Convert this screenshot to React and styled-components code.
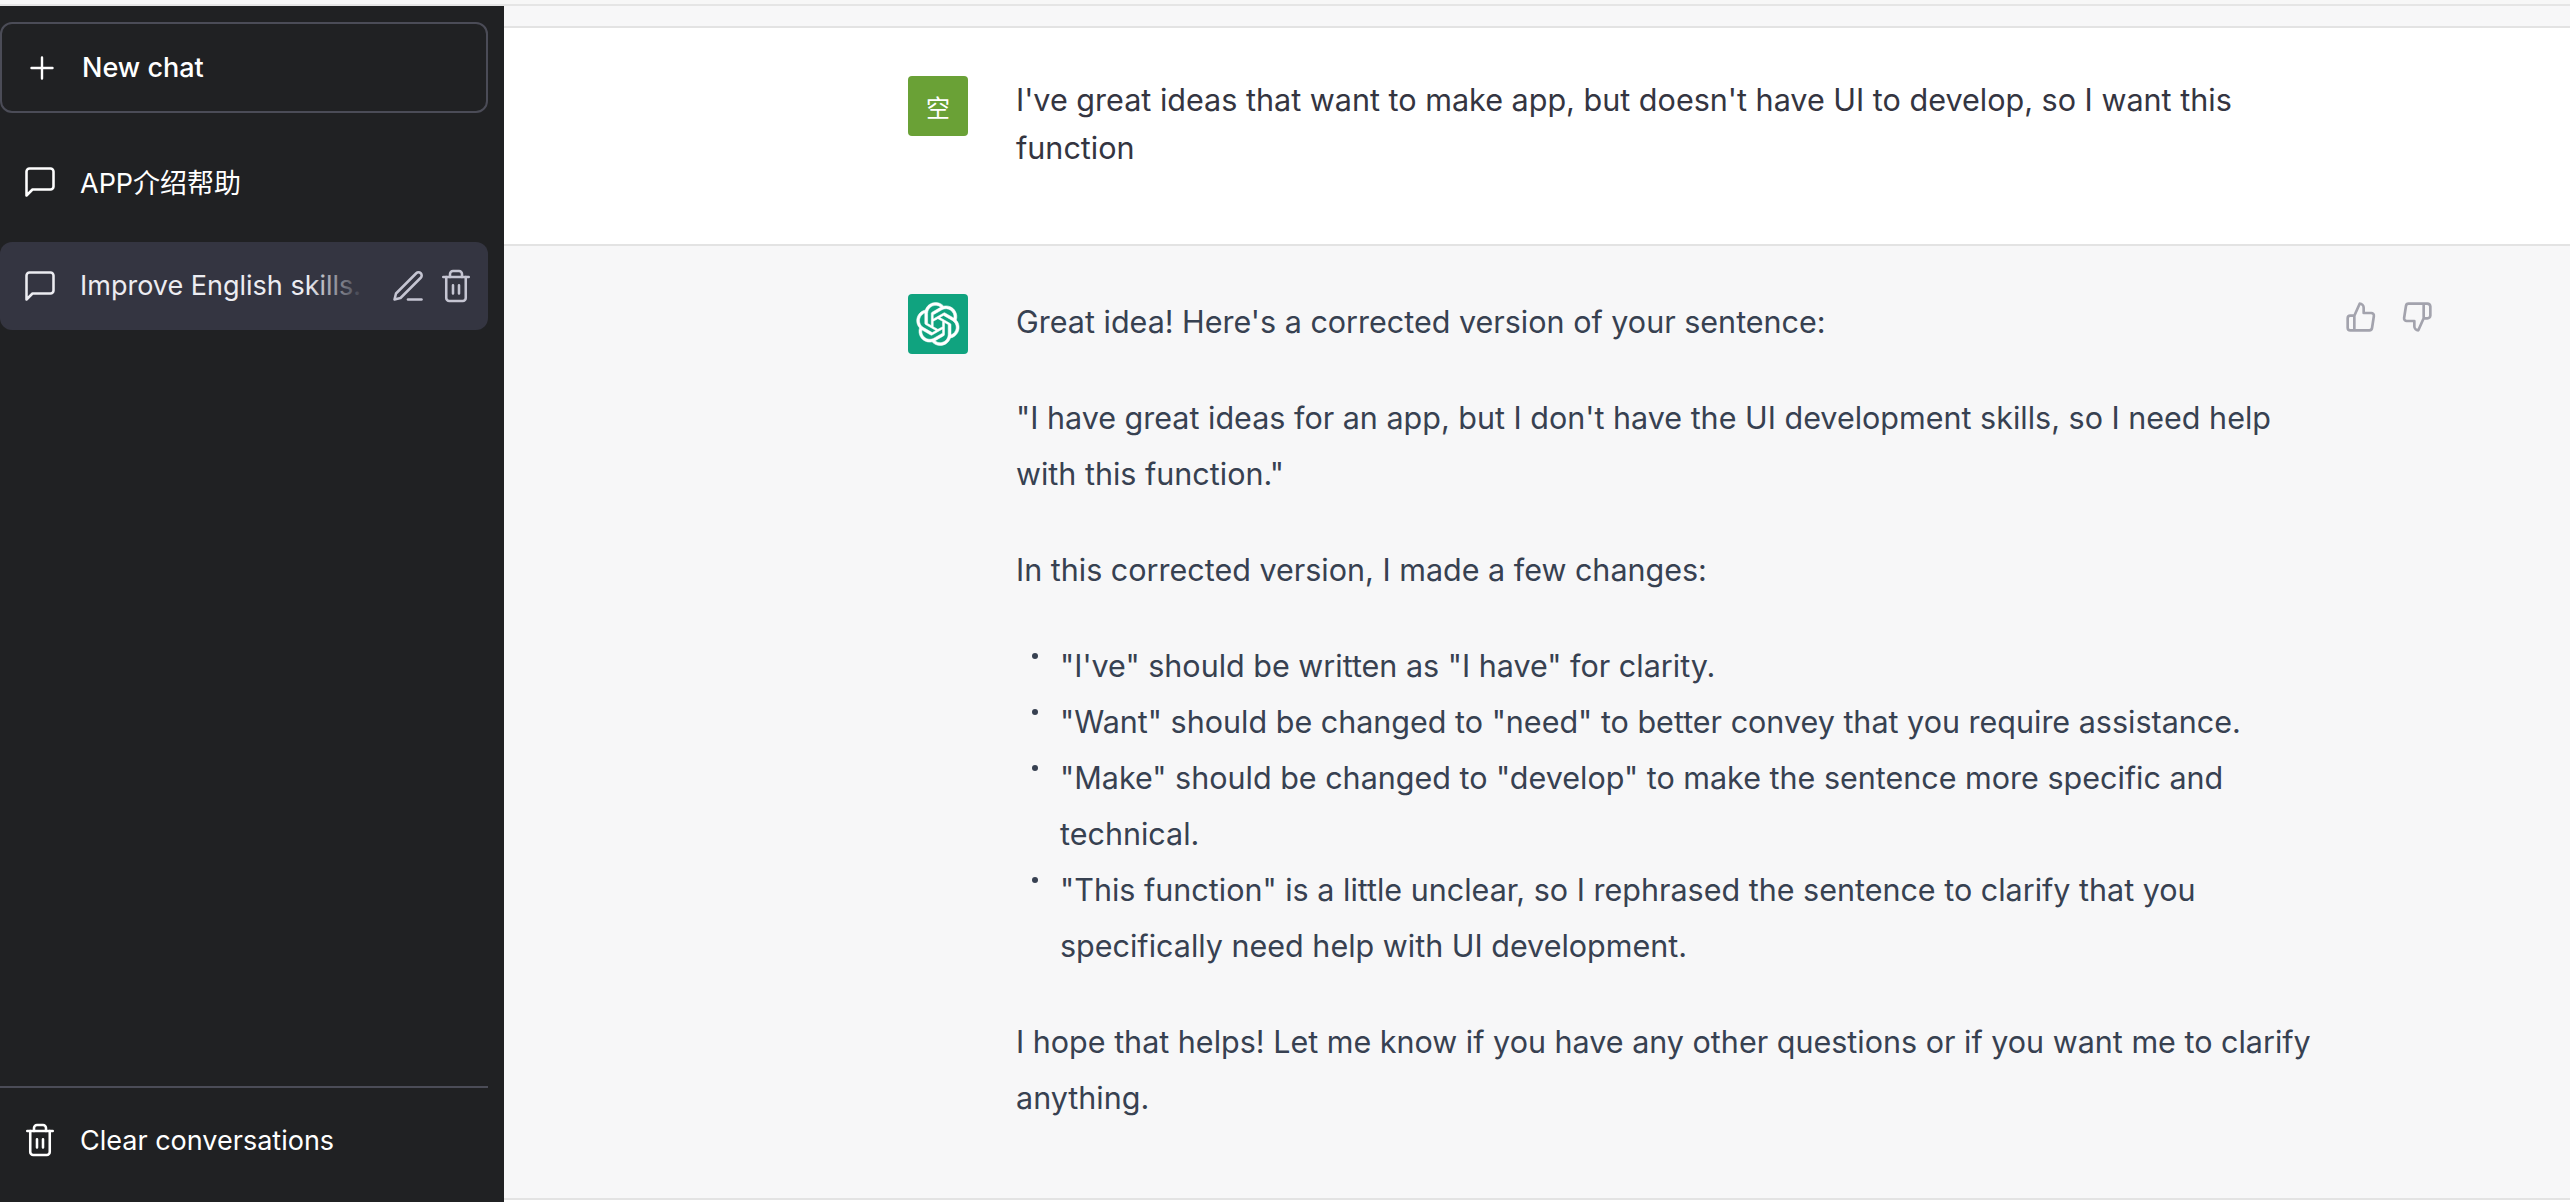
import React from "react";
import styled, { createGlobalStyle } from "styled-components";

const Global = createGlobalStyle`
  html, body { margin: 0; padding: 0; height: 100%; background: #fff; }
  body { font-family: Inter, "Noto Sans CJK SC", sans-serif; overflow: hidden; }
  * { box-sizing: border-box; }
`;

const Page = styled.div`
  height: 1202px;
  width: 2570px;
  display: flex;
  flex-direction: column;
  background: #fff;
`;
const TopEdge = styled.div`
  height: 6px;
  flex: none;
  border-bottom: 2px solid #e5e5e5;
  background: #f7f7f7;
`;
const Shell = styled.div`
  flex: 1;
  min-height: 0;
  display: flex;
`;
const Sidebar = styled.aside`
  width: 504px;
  flex: none;
  background: #202123;
  padding: 16px 16px 0 0;
  display: flex;
  flex-direction: column;
  color: #fff;
`;
const NewChat = styled.button`
  height: 91px;
  flex: none;
  display: flex;
  align-items: center;
  gap: 22px;
  padding: 0 0 0 22px;
  background: transparent;
  color: #fff;
  border: 2px solid #4b4c57;
  border-radius: 12px;
  font: 500 27px Inter, "Noto Sans CJK SC", sans-serif;
`;
const Conversations = styled.nav`
  flex: 1;
  display: flex;
  flex-direction: column;
  gap: 16px;
  margin-top: 25px;
`;
const ChatRow = styled.div`
  height: 88px;
  flex: none;
  display: flex;
  align-items: center;
  gap: 22px;
  padding: 0 14px 0 22px;
  border-radius: 12px;
  background: ${(p) => (p.$active ? "#343541" : "transparent")};
  color: ${(p) => (p.$active ? "#ececf1" : "#fff")};
  font-size: 27px;
`;
const ChatTitle = styled.span`
  position: relative;
  flex: 1;
  min-width: 0;
  white-space: nowrap;
  overflow: hidden;
  padding-bottom: 2px;
  ${(p) =>
    p.$fade &&
    `&::after {
      content: "";
      position: absolute;
      top: 0; right: 0; bottom: 0;
      width: 60px;
      background: linear-gradient(to left, #343541 5%, rgba(52,53,65,0));
    }`}
`;
const RowActions = styled.div`
  display: flex;
  align-items: center;
  gap: 12px;
  color: #c5c5d2;
`;
const Footer = styled.div`
  flex: none;
  height: 116px;
  border-top: 2px solid #4b4c57;
  display: flex;
  align-items: center;
  gap: 22px;
  padding: 0 0 10px 22px;
  color: #fff;
  font-size: 27px;
`;
const Main = styled.main`
  flex: 1;
  min-width: 0;
  display: flex;
  flex-direction: column;
  background: #fff;
`;
const MainTop = styled.div`
  height: 22px;
  flex: none;
  background: #f7f7f8;
  border-bottom: 2px solid #e3e3e3;
`;
const Message = styled.section`
  display: flex;
  flex: none;
  padding: 48px 0 72px 404px;
  background: ${(p) => (p.$bot ? "#f7f7f8" : "#fff")};
  border-bottom: 2px solid #e3e3e3;
  color: #374151;
`;
const Avatar = styled.div`
  width: 60px;
  height: 60px;
  flex: none;
  border-radius: 4px;
  background: ${(p) => p.$color};
  color: #fff;
  display: flex;
  align-items: center;
  justify-content: center;
  font-size: 24px;
`;
const Body = styled.div`
  width: 1296px;
  margin-left: 48px;
  flex: none;
  font-size: 30.5px;
  line-height: 56px;
`;
const UserText = styled.div`
  width: 1296px;
  margin-left: 48px;
  flex: none;
  font-size: 30.55px;
  line-height: 48px;
  color: #343541;
`;
const Para = styled.p`
  margin: 0 0 40px;
  &:last-child { margin-bottom: 0; }
`;
const Bullets = styled.ul`
  list-style: none;
  margin: 0 0 40px;
  padding: 0 0 0 44px;
`;
const Bullet = styled.li`
  position: relative;
  &::before {
    content: "";
    position: absolute;
    left: -28px;
    top: 15px;
    width: 6px;
    height: 6px;
    border-radius: 50%;
    background: #374151;
  }
`;
const Feedback = styled.div`
  display: flex;
  gap: 24px;
  margin: 7px 0 0 33px;
  color: #a3a3ad;
  height: 32px;
`;

const Ic = ({ size = 36, stroke = 1.7, vb = 24, children }) => (
  <svg width={size} height={size} viewBox={`0 0 ${vb} ${vb}`} fill="none" stroke="currentColor"
    strokeWidth={stroke} strokeLinecap="round" strokeLinejoin="round" style={{ flex: "none" }}>
    {children}
  </svg>
);
const ChatIcon = () => <Ic><path d="M21 15a2 2 0 0 1-2 2H7l-4 4V5a2 2 0 0 1 2-2h14a2 2 0 0 1 2 2z" /></Ic>;
const PlusIcon = () => <Ic stroke={1.6}><path d="M12 5v14M5 12h14" /></Ic>;
const TrashIcon = () => (
  <Ic>
    <path d="M3.5 6h17" />
    <path d="M18.5 6v14a2 2 0 0 1-2 2h-9a2 2 0 0 1-2-2V6" />
    <path d="M8 6V4a2 2 0 0 1 2-2h4a2 2 0 0 1 2 2v2" />
    <path d="M10 11.5v5.5M14 11.5v5.5" />
  </Ic>
);
const PenIcon = () => (
  <Ic>
    <path d="M12 21h9" />
    <path d="M17.5 3.5a2.1 2.1 0 0 1 3 3L7 20l-4 1 1-4z" />
  </Ic>
);
const ThumbUp = () => (
  <Ic size={32} stroke={2}>
    <path d="M14 9V5a3 3 0 0 0-3-3l-4 9v11h11.28a2 2 0 0 0 2-1.7l1.38-9a2 2 0 0 0-2-2.3zM7 22H4a2 2 0 0 1-2-2v-7a2 2 0 0 1 2-2h3" />
  </Ic>
);
const ThumbDown = () => (
  <Ic size={32} stroke={2}>
    <path d="M10 15v4a3 3 0 0 0 3 3l4-9V2H5.72a2 2 0 0 0-2 1.7l-1.38 9a2 2 0 0 0 2 2.3zm7-13h2.67A2.31 2.31 0 0 1 22 4v7a2.31 2.31 0 0 1-2.33 2H17" />
  </Ic>
);
const OpenAILogo = () => (
  <svg width="44" height="44" viewBox="0 0 41 41" fill="#fff" stroke="#fff" strokeWidth="0.5">
    <path d="M37.5324 16.8707C37.9808 15.5241 38.1363 14.0974 37.9886 12.6859C37.8409 11.2744 37.3934 9.91076 36.676 8.68622C35.6126 6.83404 33.9882 5.3676 32.0373 4.4985C30.0864 3.62941 27.9098 3.40259 25.8215 3.85078C24.8796 2.7893 23.7219 1.94125 22.4257 1.36341C21.1295 0.785575 19.7249 0.491269 18.3058 0.500197C16.1708 0.495044 14.0893 1.16803 12.3614 2.42214C10.6335 3.67624 9.34853 5.44666 8.6917 7.47815C7.30085 7.76286 5.98686 8.3414 4.8377 9.17505C3.68854 10.0087 2.73073 11.0782 2.02839 12.312C0.956464 14.1591 0.498905 16.2988 0.721698 18.4228C0.944492 20.5467 1.83612 22.5449 3.268 24.1293C2.81966 25.4759 2.66413 26.9026 2.81182 28.3141C2.95951 29.7256 3.40701 31.0892 4.12437 32.3138C5.18791 34.1659 6.8123 35.6322 8.76321 36.5013C10.7141 37.3704 12.8907 37.5973 14.9789 37.1492C15.9208 38.2107 17.0786 39.0587 18.3747 39.6366C19.6709 40.2144 21.0755 40.5087 22.4946 40.4998C24.6307 40.5054 26.7133 39.8321 28.4418 38.5772C30.1704 37.3223 31.4556 35.5506 32.1119 33.5179C33.5027 33.2332 34.8167 32.6547 35.9659 31.821C37.115 30.9874 38.0728 29.9178 38.7752 28.684C39.8458 26.8371 40.3023 24.6979 40.0789 22.5748C39.8556 20.4517 38.9639 18.4544 37.5324 16.8707ZM22.4978 37.8849C20.7443 37.8874 19.0459 37.2733 17.6994 36.1501C17.7601 36.117 17.8666 36.0586 17.936 36.0161L25.9004 31.4156C26.1003 31.3019 26.2663 31.137 26.3813 30.9378C26.4964 30.7386 26.5563 30.5124 26.5549 30.2825V19.0542L29.9213 20.998C29.9389 21.0068 29.9541 21.0198 29.9656 21.0359C29.977 21.052 29.9842 21.0707 29.9867 21.0902V30.3889C29.9842 32.375 29.1946 34.2791 27.7909 35.6841C26.3872 37.0892 24.4838 37.8806 22.4978 37.8849ZM6.39227 31.0064C5.51397 29.4888 5.19742 27.7107 5.49804 25.9832C5.55718 26.0187 5.66048 26.0818 5.73461 26.1244L13.699 30.7248C13.8975 30.8408 14.1233 30.902 14.3532 30.902C14.583 30.902 14.8088 30.8408 15.0073 30.7248L24.731 25.1103V28.9979C24.7321 29.0177 24.7283 29.0376 24.7199 29.0556C24.7115 29.0736 24.6988 29.0893 24.6829 29.1012L16.6317 33.7497C14.9096 34.7416 12.8643 35.0097 10.9447 34.4954C9.02506 33.9811 7.38785 32.7263 6.39227 31.0064ZM4.29707 13.6194C5.17156 12.0998 6.55279 10.9364 8.19885 10.3327C8.19885 10.4013 8.19491 10.5228 8.19491 10.6071V19.808C8.19351 20.0378 8.25334 20.2638 8.36823 20.4629C8.48312 20.6619 8.64893 20.8267 8.84863 20.9404L18.5723 26.5542L15.206 28.4979C15.1894 28.5089 15.1703 28.5155 15.1505 28.5173C15.1307 28.5191 15.1107 28.516 15.0924 28.5082L7.04046 23.8557C5.32135 22.8601 4.06716 21.2235 3.55289 19.3046C3.03862 17.3858 3.30624 15.3413 4.29707 13.6194ZM31.955 20.0556L22.2312 14.4411L25.5976 12.4981C25.6142 12.4872 25.6333 12.4805 25.6531 12.4787C25.6729 12.4769 25.6928 12.4801 25.7111 12.4879L33.7631 17.1364C34.9967 17.849 36.0017 18.8982 36.6606 20.1613C37.3194 21.4244 37.6047 22.849 37.4832 24.2684C37.3617 25.6878 36.8382 27.0432 35.9743 28.1759C35.1103 29.3086 33.9415 30.1717 32.6047 30.6641C32.6047 30.5947 32.6047 30.4733 32.6047 30.3889V21.188C32.6066 20.9586 32.5474 20.7328 32.4332 20.5338C32.319 20.3348 32.154 20.1698 31.955 20.0556ZM35.3055 15.0128C35.2464 14.9765 35.1431 14.9142 35.069 14.8717L27.1045 10.2712C26.906 10.1554 26.6803 10.0943 26.4504 10.0943C26.2206 10.0943 25.9948 10.1554 25.7963 10.2712L16.0726 15.8858V11.9982C16.0715 11.9783 16.0753 11.9585 16.0837 11.9405C16.0921 11.9225 16.1048 11.9068 16.1207 11.8949L24.1719 7.25025C25.4053 6.53903 26.8158 6.19376 28.2383 6.25482C29.6608 6.31589 31.0364 6.78077 32.2044 7.59508C33.3723 8.40939 34.2842 9.53945 34.8334 10.8531C35.3826 12.1667 35.5464 13.6095 35.3055 15.0128ZM14.2424 21.9419L10.8752 19.9981C10.8576 19.9893 10.8423 19.9763 10.8309 19.9602C10.8195 19.9441 10.8122 19.9254 10.8098 19.9058V10.6071C10.8107 9.18295 11.2173 7.78848 11.9819 6.58696C12.7466 5.38544 13.8377 4.42659 15.1275 3.82264C16.4173 3.21869 17.8524 2.99464 19.2649 3.1767C20.6775 3.35876 22.0089 3.93941 23.1034 4.85067C23.0427 4.88379 22.937 4.94215 22.8668 4.98473L14.9024 9.58517C14.7025 9.69878 14.5366 9.86356 14.4215 10.0626C14.3065 10.2616 14.2466 10.4877 14.2479 10.7175L14.2424 21.9419ZM16.071 17.9991L20.4018 15.4978L24.7325 17.9975V22.9985L20.4018 25.4983L16.071 22.9985V17.9991Z" />
  </svg>
);

export default function App() {
  return (
    <Page>
      <Global />
      <TopEdge />
      <Shell>
        <Sidebar>
          <NewChat><PlusIcon />New chat</NewChat>
          <Conversations>
            <ChatRow><ChatIcon /><ChatTitle>APP介绍帮助</ChatTitle></ChatRow>
            <ChatRow $active>
              <ChatIcon />
              <ChatTitle $fade>Improve English skills.</ChatTitle>
              <RowActions><PenIcon /><TrashIcon /></RowActions>
            </ChatRow>
          </Conversations>
          <Footer><TrashIcon />Clear conversations</Footer>
        </Sidebar>
        <Main>
          <MainTop />
          <Message>
            <Avatar $color="#6aa136">空</Avatar>
            <UserText>I've great ideas that want to make app, but doesn't have UI to develop, so I want this function</UserText>
          </Message>
          <Message $bot>
            <Avatar $color="#10a37f"><OpenAILogo /></Avatar>
            <Body>
              <Para>Great idea! Here's a corrected version of your sentence:</Para>
              <Para>"I have great ideas for an app, but I don't have the UI development skills, so I need help with this function."</Para>
              <Para>In this corrected version, I made a few changes:</Para>
              <Bullets>
                <Bullet>"I've" should be written as "I have" for clarity.</Bullet>
                <Bullet>"Want" should be changed to "need" to better convey that you require assistance.</Bullet>
                <Bullet>"Make" should be changed to "develop" to make the sentence more specific and technical.</Bullet>
                <Bullet>"This function" is a little unclear, so I rephrased the sentence to clarify that you specifically need help with UI development.</Bullet>
              </Bullets>
              <Para>I hope that helps! Let me know if you have any other questions or if you want me to clarify anything.</Para>
            </Body>
            <Feedback><ThumbUp /><ThumbDown /></Feedback>
          </Message>
        </Main>
      </Shell>
    </Page>
  );
}
